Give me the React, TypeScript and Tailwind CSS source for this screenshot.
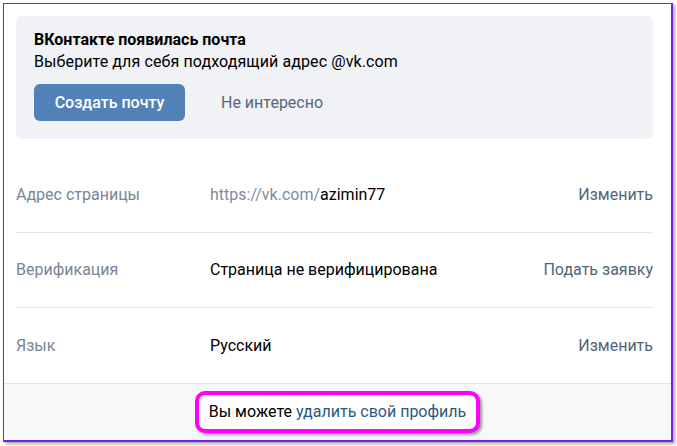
const rows = [
  {
    label: "Адрес страницы",
    value: (
      <>
        <span className="text-[#818c99]">https://vk.com/</span>
        <span>azimin77</span>
      </>
    ),
    action: "Изменить",
  },
  { label: "Верификация", value: "Страница не верифицирована", action: "Подать заявку" },
  { label: "Язык", value: "Русский", action: "Изменить" },
];

const App = () => {
  return (
    <div
      className="w-[677px] h-[446px] bg-white pl-[3px] pt-[3px] text-[16px] text-black"
      style={{ fontFamily: "Roboto, 'Liberation Sans', sans-serif" }}
    >
      <div className="w-[670px] h-[439px] border-t border-l border-r-2 border-b-2 border-[#7a1fe4] shadow-[2px_2px_3px_rgba(0,0,0,0.35)] flex flex-col">
        <div className="pl-[12px] pr-[18px] pt-[12px]">
          <div className="h-[123px] bg-[#f0f2f5] rounded-[6px] pl-[18px] pt-[14px]">
            <div className="font-bold leading-[20px]">ВКонтакте появилась почта</div>
            <div className="leading-[20px] mt-[2px] tracking-[0.1px]">Выберите для себя подходящий адрес @vk.com</div>
            <div className="flex items-center mt-[12px]">
              <button className="h-[37px] w-[151px] rounded-[6px] bg-[#5181b8] text-white font-medium">
                Создать почту
              </button>
              <span className="ml-[36px] text-[#55677d]">Не интересно</span>
            </div>
          </div>
        </div>
        <div className="pl-[12px] pr-[18px] mt-[19px]">
          {rows.map((row, i) => (
            <div
              key={row.label}
              className={`h-[75px] flex items-center ${i < rows.length - 1 ? "border-b border-[#e1e3e6]" : ""}`}
            >
              <span className="w-[194px] text-[#7a8594]">{row.label}</span>
              <span className="flex-1">{row.value}</span>
              <span className="text-[#526479]">{row.action}</span>
            </div>
          ))}
        </div>
        <div className="flex-1 border-t border-[#e1e3e6] bg-[#f7f8fa] flex items-center justify-center">
          <div className="h-[42px] px-[10px] flex items-center rounded-[10px] border-4 border-[#ff00ff] bg-white shadow-[2px_2px_3px_rgba(0,0,0,0.4)]">
            <span>Вы можете </span>
            <span className="ml-[4px] text-[#2a5885]">удалить свой профиль</span>
          </div>
        </div>
      </div>
    </div>
  );
};

export default App;
